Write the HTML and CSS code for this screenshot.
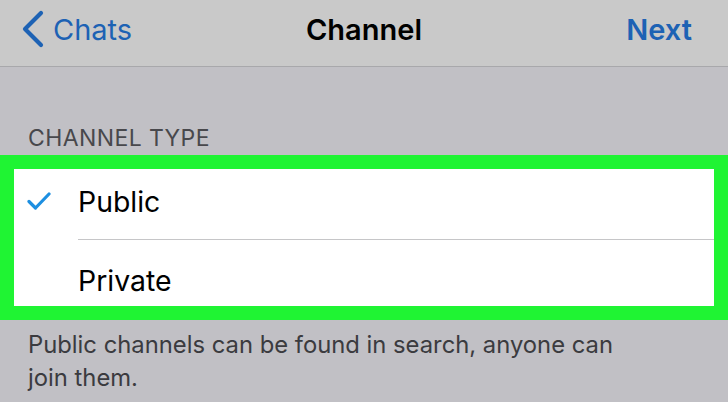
FILE: index.html
```html
<!DOCTYPE html>
<html lang="en">
<head>
  <meta charset="UTF-8">
  <title>Channel</title>
  <link rel="stylesheet" href="styles.css">
</head>
<body>

  <!-- Навигация -->
  <header class="nav">
    <a class="nav-back" href="#">
      <svg class="chevron" width="24" height="38" viewBox="0 0 24 38">
        <path d="M21 3 L5 19 L21 35" fill="none" stroke="#1d62b4" stroke-width="4.2" stroke-linecap="round" stroke-linejoin="round"/>
      </svg>
      <span>Chats</span>
    </a>
    <div class="nav-title">Channel</div>
    <a class="nav-next" href="#">Next</a>
  </header>

  <div class="caption">CHANNEL TYPE</div>

  <div class="group">
    <div class="row">
      <span class="check">
        <svg width="24" height="18" viewBox="0 0 24 18">
          <path d="M2 9.5 L8.5 16 L22 2" fill="none" stroke="#1d8fe1" stroke-width="3.2" stroke-linecap="round" stroke-linejoin="round"/>
        </svg>
      </span>
      <span class="row-label">Public</span>
    </div>
    <div class="row">
      <span class="check"></span>
      <span class="row-label">Private</span>
    </div>
  </div>

  <p class="note">Public channels can be found in search, anyone can join them.</p>

</body>
</html>
```

FILE: styles.css
```css
/* Основни стилове */
body {
  margin: 0;
  background-color: #c1c0c5;
  font-family: 'Inter', 'Liberation Sans', sans-serif;
  color: #000;
  width: 728px;
  height: 402px;
  overflow: hidden;
}

/* Навигация */
.nav {
  height: 67px;
  background-color: #c9c9c9;
  border-bottom: 1px solid #a8a8ab;
  box-sizing: border-box;
  display: flex;
  align-items: center;
  justify-content: space-between;
  padding: 0 36px 8px 20px;
  position: relative;
}

.nav a {
  text-decoration: none;
  color: #1d62b4;
  font-size: 29px;
}

.nav-back {
  display: flex;
  align-items: center;
  gap: 9px;
  font-weight: 400;
}

.nav-title {
  position: absolute;
  left: 0;
  right: 0;
  top: 0;
  bottom: 8px;
  display: flex;
  align-items: center;
  justify-content: center;
  font-size: 29px;
  font-weight: 600;
  pointer-events: none;
}

.nav-next {
  font-weight: 600;
}

/* Заглавие на групата */
.caption {
  padding: 56px 0 0 28px;
  height: 32px;
  font-size: 23px;
  line-height: 30px;
  color: #48484c;
  letter-spacing: 0.4px;
}

/* Зелената рамка */
.group {
  border: 14px solid #1ff433;
  background-color: #fff;
}

.row {
  display: flex;
  align-items: stretch;
  height: 70px;
}

.row + .row {
  height: 67px;
}

.check {
  width: 64px;
  padding: 0 0 6px 13px;
  box-sizing: border-box;
  display: flex;
  align-items: center;
}

.row-label {
  flex: 1;
  display: flex;
  align-items: center;
  font-size: 28.4px;
  padding-bottom: 6px;
}

.row + .row .row-label {
  border-top: 1px solid #c6c6c8;
  padding: 14px 0 0;
}

/* Пояснение */
.note {
  margin: 0;
  padding: 8px 90px 0 28px;
  font-size: 23.8px;
  line-height: 33px;
  color: #3b3b3f;
}
```
